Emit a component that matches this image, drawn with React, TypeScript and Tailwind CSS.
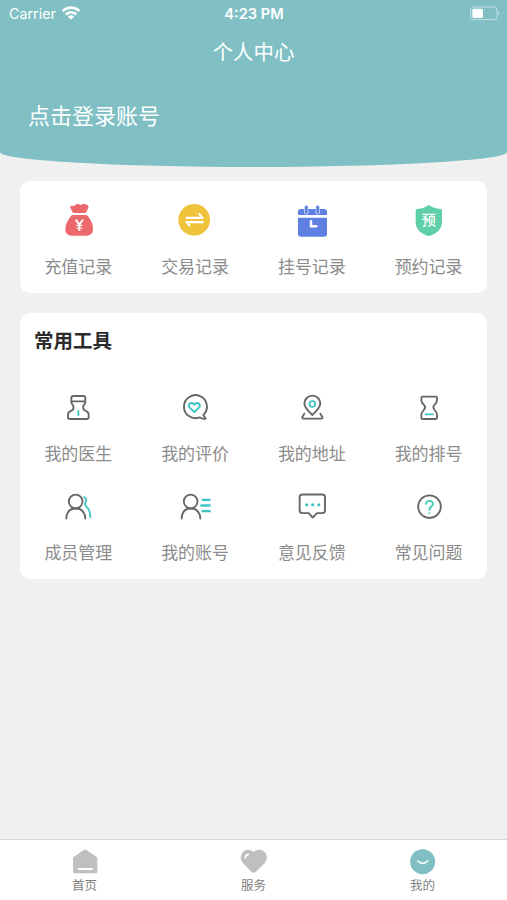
import type { ReactNode } from 'react';

const INK = '#666666';
const TEAL = '#3fc4c6';

function ToolIcon({ box, children }: { box: string; children: ReactNode }) {
  return (
    <svg
      viewBox={box}
      className="block h-9 w-9"
      fill="none"
      stroke={INK}
      strokeWidth="5.6"
      strokeLinecap="round"
      strokeLinejoin="round"
    >
      {children}
    </svg>
  );
}

function Item({ label, children }: { label: string; children: ReactNode }) {
  return (
    <div className="flex flex-col items-center gap-4">
      {children}
      <span className="text-[17px] leading-6 whitespace-nowrap text-[#8c8c8c]">{label}</span>
    </div>
  );
}

function Tab({ label, box, children }: { label: string; box: string; children: ReactNode }) {
  return (
    <div className="flex flex-1 flex-col items-center pt-[6px]">
      <svg viewBox={box} className="block h-[30px] w-[30px]">
        {children}
      </svg>
      <span className="text-[12.5px] leading-[18px] text-[#808080]">{label}</span>
    </div>
  );
}

function StatusBar() {
  return (
    <div className="grid h-[27px] grid-cols-3 items-center pr-[7px] pl-[9px] font-['Inter','Liberation_Sans',sans-serif] text-white">
      <div className="flex items-center gap-[6px]">
        <span className="pt-px text-[14.3px] leading-none">Carrier</span>
        <svg viewBox="0 0 54 42" className="h-[14px] w-[18px]" fill="none" stroke="white" strokeWidth="8">
          <path d="M2 15.500C16 1 38 1 52 15.500" />
          <path d="M11.500 25.500C20 16.500 34 16.500 42.500 25.500" />
          <path d="M27 41L17.500 31.500Q27 23.500 36.500 31.500Z" fill="white" stroke="none" />
        </svg>
      </div>
      <span className="pt-[2px] pr-px text-center text-[14.6px] leading-none font-semibold whitespace-nowrap">4:23 PM</span>
      <svg viewBox="0 0 90 45" className="h-[15px] w-[30px] justify-self-end">
        <rect x="2" y="3" width="79" height="38" rx="9" fill="none" stroke="white" strokeOpacity=".5" strokeWidth="3" />
        <rect x="7" y="8" width="32" height="28" rx="5" fill="white" />
        <path d="M84 16Q90 22 84 28Z" fill="white" fillOpacity=".6" />
      </svg>
    </div>
  );
}

export default function App() {
  return (
    <div className="flex h-[900px] w-[507px] flex-col bg-[#f0f0f0] font-['Noto_Sans_CJK_SC',sans-serif]">
      <header className="h-[167px] rounded-b-[50%_15px] bg-[#80c0c5] text-white">
        <StatusBar />
        <h1 className="pt-2 text-center text-[20.5px] leading-8">个人中心</h1>
        <p className="pt-[31px] pl-7 text-[22px] leading-8">点击登录账号</p>
      </header>

      <main className="flex flex-1 flex-col gap-5 px-5 pt-[14px]">
        <section className="grid h-[112px] grid-cols-4 rounded-[10px] bg-white pt-[21px]">
          <Item label="充值记录">
            <svg viewBox="121 66 108 108" className="block h-9 w-9">
              <path
                d="M158 96L152 83Q150 76 157 77L164 78Q167 72 173 72Q179 71 182 76Q187 71 193 72Q200 72 206 77Q208 80 205 85L200 96Q199 99 195 99H164Q160 99 158 96Z"
                fill="#eb686d"
              />
              <path
                d="M160 105H198Q202 105 205 109Q220 128 220 147Q220 166 202 167H155Q137 166 137 148Q138 128 153 109Q156 105 160 105Z"
                fill="#eb686d"
              />
              <path d="M168 119L179 134L190 119M179 132V153" fill="none" stroke="white" strokeWidth="5.500" />
              <path d="M170 136H188M170 144H188" fill="none" stroke="white" strokeWidth="3.500" />
            </svg>
          </Item>
          <Item label="交易记录">
            <svg viewBox="471.500 65.500 108 108" className="block h-9 w-9">
              <circle cx="523" cy="119" r="47.500" fill="#f0c33c" />
              <path
                d="M500 113H548L539 102M549 126H500L509 136"
                fill="none"
                stroke="white"
                strokeWidth="6.500"
                strokeLinecap="round"
                strokeLinejoin="round"
              />
            </svg>
          </Item>
          <Item label="挂号记录">
            <svg viewBox="102 66 108 108" className="block h-9 w-9">
              <path d="M114 105V96Q114 87 123 87H192Q201 87 201 96V105Z" fill="#5f80e3" />
              <path d="M114 113H201V161Q201 170 192 170H123Q114 170 114 161Z" fill="#5f80e3" />
              <path d="M139 82V97M173 82V97" stroke="#c9d5f8" strokeWidth="13" strokeLinecap="round" />
              <path d="M139 81V97M173 81V97" stroke="#5f80e3" strokeWidth="8" strokeLinecap="round" />
              <path d="M153 124V139H169" fill="none" stroke="white" strokeWidth="7.500" strokeLinecap="round" />
            </svg>
          </Item>
          <Item label="预约记录">
            <div className="grid h-9 w-9">
              <svg viewBox="453 66 108 108" className="col-start-1 row-start-1 block h-9 w-9">
                <path
                  d="M506 75Q521 86 542 87Q546 87 546 91V128Q546 155 506 169Q467 155 467 128V91Q467 87 471 87Q492 86 506 75Z"
                  fill="#5fcfa9"
                />
              </svg>
              <span className="col-start-1 row-start-1 pt-2 text-center text-[14px] leading-[18px] font-medium text-white">
                预
              </span>
            </div>
          </Item>
        </section>

        <section className="h-[266px] rounded-[10px] bg-white">
          <h2 className="pt-[11px] pl-[14px] text-[19.5px] leading-8 font-bold text-[#2b2b2b]">常用工具</h2>
          <div className="grid grid-cols-4 gap-y-[23px] pt-[33px]">
            <Item label="我的医生">
              <ToolIcon box="121 236 108 108">
                <path d="M155 275V263Q155 257 161 257H191Q197 257 197 263V275Q197 280 191 286Q189 298 197 301Q207 305 207 313V320Q207 326 201 326H151Q145 326 145 320V313Q145 305 155 301Q163 298 161 286Q155 280 155 275ZM156 273H196" />
                <path d="M176 302V314" stroke={TEAL} />
              </ToolIcon>
            </Item>
            <Item label="我的评价">
              <ToolIcon box="473 236 108 108">
                <path d="M559 325L552 314A34.500 34.500 0 1 0 541 321Q548 327 559 325Z" />
                <path
                  d="M525 305L511 292Q506 286 510 281Q517 274 525 283Q533 274 540 281Q544 286 539 292Z"
                  stroke={TEAL}
                />
              </ToolIcon>
            </Item>
            <Item label="我的地址">
              <ToolIcon box="102 26 108 108">
                <path d="M157 104Q134 83 133 70A24 24 0 0 1 181 70Q180 83 157 104Z" />
                <path d="M133 100L127 110Q125 115 131 115H183Q189 115 187 110L181 100" />
                <circle cx="157" cy="71" r="8.500" stroke={TEAL} />
              </ToolIcon>
            </Item>
            <Item label="我的排号">
              <ToolIcon box="453 26 108 108">
                <path d="M488 49H527Q531 49 531 53V60Q531 66 524 73Q516 80 524 89Q531 97 531 103V112Q531 116 527 116H488Q484 116 484 112V103Q484 97 491 89Q500 80 491 73Q484 66 484 60V53Q484 49 488 49Z" />
                <path d="M497 102H519" stroke={TEAL} />
              </ToolIcon>
            </Item>
            <Item label="成员管理">
              <ToolIcon box="121 38.500 108 108">
                <circle cx="168" cy="79" r="20.500" />
                <path d="M140 130Q141 100 168 100Q195 100 197 130" />
                <path d="M193 66Q202 69 198 80Q194 90 201 95Q212 105 212 126" stroke={TEAL} />
              </ToolIcon>
            </Item>
            <Item label="我的账号">
              <ToolIcon box="472 38.500 108 108">
                <circle cx="513" cy="79" r="20.500" />
                <path d="M486 130Q487 100 513 100Q540 100 542 130" />
                <path d="M549 74H570M545 91H570M549 108H570" stroke={TEAL} strokeWidth="7" />
              </ToolIcon>
            </Item>
            <Item label="意见反馈">
              <ToolIcon box="102 38.500 108 108">
                <path d="M128 58H187Q195 58 195 66V106Q195 114 187 114H171L158 127L146 114H128Q119 114 119 106V66Q119 58 128 58Z" />
                <path d="M140 89H140.100M158 89H158.100M176 89H176.100" stroke={TEAL} strokeWidth="9.500" />
              </ToolIcon>
            </Item>
            <Item label="常见问题">
              <ToolIcon box="453 38.500 108 108">
                <circle cx="508.500" cy="94.500" r="34" />
                <path d="M498 86Q499 77 508 77Q518 77 519 86Q519 91 513 95Q508 99 508 104M508 114V114.500" stroke="#3fcbb9" />
              </ToolIcon>
            </Item>
          </div>
        </section>
      </main>

      <nav className="flex h-[61px] border-t border-[#d9d9d9] bg-white">
        <Tab label="首页" box="210 48 90 90">
          <path
            d="M251 60Q255 57 259 60L289 80Q292 82 292 86V125Q292 130 287 130H224Q219 130 219 125V86Q219 82 222 80Z"
            fill="#bfbfbf"
          />
          <path d="M236 117H276" stroke="white" strokeWidth="6" strokeLinecap="round" />
        </Tab>
        <Tab label="服务" box="717 48 90 90">
          <path
            d="M761 66Q769 58 780 59Q799 62 801 82Q801 92 794 100L768 125Q761 131 754 125L729 100Q722 92 722 82Q724 62 742 59Q753 58 761 66Z"
            fill="#bfbfbf"
          />
          <path d="M736 83Q736 75 745 73" fill="none" stroke="white" strokeWidth="5" strokeLinecap="round" />
        </Tab>
        <Tab label="我的" box="84 48 90 90">
          <circle cx="128" cy="95" r="37.500" fill="#80c0c5" />
          <path d="M113 93Q128 107 143 93" fill="none" stroke="white" strokeWidth="5" strokeLinecap="round" />
        </Tab>
      </nav>
    </div>
  );
}
